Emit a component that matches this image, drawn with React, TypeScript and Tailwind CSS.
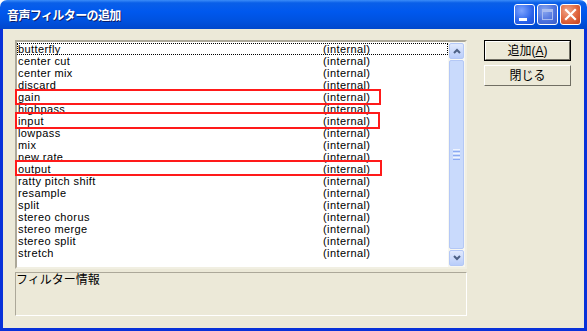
import React from 'react';

const filters = [
  'butterfly',
  'center cut',
  'center mix',
  'discard',
  'gain',
  'highpass',
  'input',
  'lowpass',
  'mix',
  'new rate',
  'output',
  'ratty pitch shift',
  'resample',
  'split',
  'stereo chorus',
  'stereo merge',
  'stereo split',
  'stretch',
];

const font = "font-['MS_UI_Gothic','Liberation_Sans','Noto_Sans_CJK_JP',sans-serif]";

function TitleButton({ kind }: { kind: 'min' | 'max' | 'close' }) {
  const base =
    'w-[21px] h-[21px] rounded-[3px] border border-white flex items-center justify-center';
  if (kind === 'close') {
    return (
      <div className={`${base} bg-[radial-gradient(circle_at_35%_30%,#f0a58a,#e0653d_55%,#c4401f)]`}>
        <svg width="13" height="13" viewBox="0 0 13 13">
          <path d="M2 2 L11 11 M11 2 L2 11" stroke="white" strokeWidth="2.2" strokeLinecap="square" />
        </svg>
      </div>
    );
  }
  return (
    <div
      className={`${base} ${
        kind === 'max'
          ? 'bg-[radial-gradient(circle_at_35%_30%,#8aa8f0,#4a6fdc_60%,#3a5cc8)] border-[#9fb6f2]'
          : 'bg-[radial-gradient(circle_at_35%_30%,#7ea4ff,#2a63ea_60%,#1d4fd8)]'
      }`}
    >
      {kind === 'min' ? (
        <div className="w-[8px] h-[3px] bg-white mt-[9px] -ml-[3px]" />
      ) : (
        <div className="w-[11px] h-[11px] border border-[#a8bcf0] border-t-[3px]" />
      )}
    </div>
  );
}

function ScrollArrow({ up }: { up?: boolean }) {
  return (
    <div className="h-[16px] mx-[1px] rounded-[2px] border border-[#b4c8f6] bg-[linear-gradient(to_bottom,#e0e9fd,#b9cdfa)] flex items-center justify-center">
      <svg width="8" height="6" viewBox="0 0 8 6">
        <path d={up ? 'M1 5 L4 2 L7 5' : 'M1 1 L4 4 L7 1'} fill="none" stroke="#4d6185" strokeWidth="2" />
      </svg>
    </div>
  );
}

export default function App() {
  return (
    <div className={`w-[587px] h-[331px] flex flex-col ${font}`}>
      {/* Title bar */}
      <div className="h-[29px] rounded-t-[7px] bg-[linear-gradient(to_bottom,#3b8cf8_0%,#0a5fe8_10%,#0058ee_40%,#0052e0_70%,#0047cc_100%)] flex items-center pl-[7px] pr-[6px]">
        <span className="text-white text-[12px] font-bold [text-shadow:1px_1px_0_#0a1e6e] tracking-[-0.6px] pt-[2px]">
          音声フィルターの追加
        </span>
        <div className="ml-auto flex gap-[2px]">
          <TitleButton kind="min" />
          <TitleButton kind="max" />
          <TitleButton kind="close" />
        </div>
      </div>

      {/* Body */}
      <div className="flex-1 border-x-[3px] border-b-[3px] border-[#0831d9] bg-[#ece9d8] flex pl-[12px] pt-[11px] gap-[17px]">
        <div className="w-[452px] flex flex-col gap-[3px]">
          {/* List box */}
          <div className="relative h-[229px] border-2 border-t-[#aca899] border-l-[#aca899] border-b-[#f1efe2] border-r-[#f1efe2] bg-white flex">
            <div className="flex-1 pt-[1px] text-[11px] leading-[12px] tracking-[0.4px] text-black">
              {filters.map((name, i) => (
                <div
                  key={name}
                  className={`flex h-[12px] pl-[1px] overflow-hidden ${i === 0 ? 'outline outline-1 outline-dotted outline-black -outline-offset-1' : ''}`}
                >
                  <span className="w-[305px]">{name}</span>
                  <span>(internal)</span>
                </div>
              ))}
            </div>
            {/* Scrollbar */}
            <div className="w-[17px] flex flex-col bg-[#f7f7f1] py-[1px] gap-[1px]">
              <ScrollArrow up />
              <div className="flex-1 mx-[1px] rounded-[2px] border border-[#b4c8f6] bg-[#c9dafc] flex items-center justify-center">
                <div className="flex flex-col gap-[1px]">
                  <div className="w-[7px] h-[1px] bg-[#eef3fe]" />
                  <div className="w-[7px] h-[1px] bg-[#8caaf2]" />
                  <div className="w-[7px] h-[1px] bg-[#eef3fe]" />
                  <div className="w-[7px] h-[1px] bg-[#8caaf2]" />
                  <div className="w-[7px] h-[1px] bg-[#eef3fe]" />
                  <div className="w-[7px] h-[1px] bg-[#8caaf2]" />
                </div>
              </div>
              <ScrollArrow />
            </div>

            {/* annotation boxes */}
            <div className="absolute -left-[2px] top-[47px] w-[366px] h-[16px] border-2 border-[#ff1a1a]" />
            <div className="absolute -left-[2px] top-[70px] w-[365px] h-[17px] border-2 border-[#ff1a1a]" />
            <div className="absolute -left-[2px] top-[118px] w-[367px] h-[16px] border-2 border-[#ff1a1a]" />
          </div>

          {/* Info */}
          <div className="h-[44px] border border-t-[#aca899] border-l-[#aca899] border-b-white border-r-white text-[12px] leading-[12px] text-black pt-[1px]">
            フィルター情報
          </div>
        </div>

        {/* Buttons */}
        <div className="w-[87px] flex flex-col gap-[4px]">
          <div className="h-[21px] border border-black">
            <div className="h-full border border-t-white border-l-white border-b-[#716f64] border-r-[#716f64] flex items-center justify-center text-[12px] text-black">
              追加(<span className="underline">A</span>)
            </div>
          </div>
          <div className="h-[21px] border border-t-white border-l-white border-b-[#716f64] border-r-[#716f64] flex items-center justify-center text-[12px] text-black">
            閉じる
          </div>
        </div>
      </div>
    </div>
  );
}
